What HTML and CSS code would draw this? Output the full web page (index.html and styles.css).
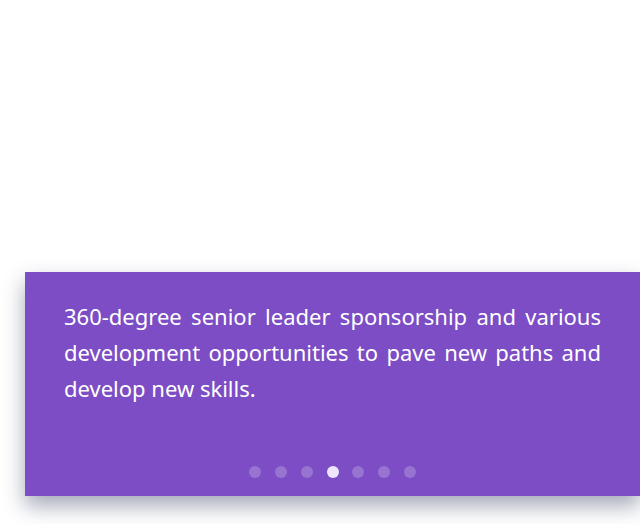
FILE: index.html
```html
<!DOCTYPE html>
<html>
	<head>
		<meta charset="UTF-8">
		<title>Slider</title>
		<link rel="stylesheet" href="styles.css">
	</head>
	<body>
		<div class="slide">
			<p class="quote">360-degree senior leader sponsorship and various development opportunities to pave new paths and develop new skills.</p>
			<ul class="dots">
				<li></li>
				<li></li>
				<li></li>
				<li class="on"></li>
				<li></li>
				<li></li>
				<li></li>
			</ul>
		</div>
	</body>
</html>
```

FILE: styles.css
```css
body {
	margin: 0;
	padding-bottom: 28px;
	background: #fff;
}
.slide {
	margin: 272px 0 0 25px;
	width: 615px;
	box-sizing: border-box;
	padding: 26px 39px 18px;
	background: #7c4dc4;
	box-shadow: 0 10px 20px rgba(30, 40, 80, 0.4);
}
.quote {
	margin: 0;
	font: 22px/36px "Noto Sans", sans-serif;
	color: #fff;
	text-align: justify;
}
.dots {
	display: flex;
	justify-content: center;
	gap: 13.7px;
	margin: 60px 0 0;
	padding: 0;
	list-style: none;
}
.dots li {
	width: 12px;
	height: 12px;
	border-radius: 50%;
	background: rgba(255, 255, 255, 0.22);
}
.dots li.on {
	background: #eee6fc;
}
```
